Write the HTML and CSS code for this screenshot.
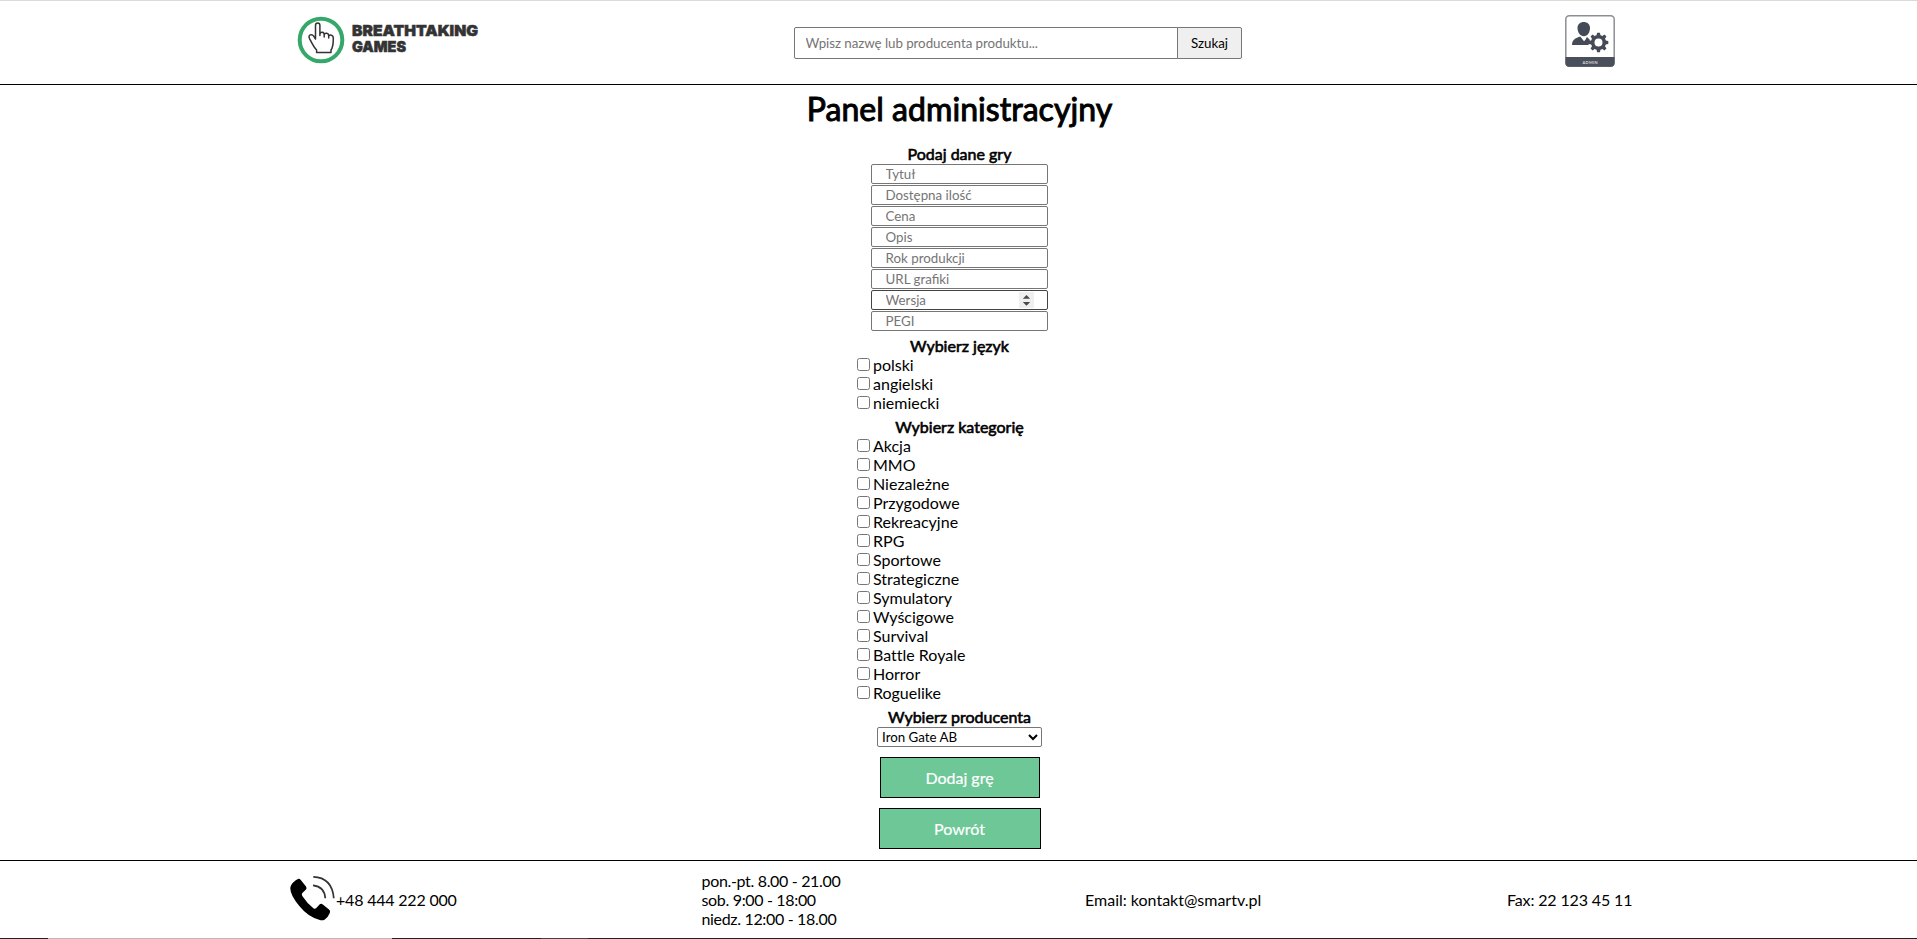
FILE: index.html
```html
<!DOCTYPE html>
<html lang="pl">
<head>
<meta charset="utf-8">
<title>Panel administracyjny</title>
<link rel="stylesheet" href="styles.css">
</head>
<body>
<header class="header">
  <a class="logo">
    <svg width="190" height="64" viewBox="0 0 190 64">
      <circle cx="31" cy="31" r="21.3" fill="#fff" stroke="#35a869" stroke-width="4"/>
      <path d="M26.6 43.5 V41 C23.5 38 21.8 34 19.4 29.3 C17.8 25.8 21.8 24.4 23.7 27.2 L25.5 30 V16.3 C25.5 13.3 29.9 13.3 29.9 16.3 V25 C30.6 22.4 34.2 22.8 34.2 25.5 C35.2 23.4 38.7 24 38.7 26.8 C40 25.2 43.3 26 43.3 29 C43.3 34.6 43.4 37.6 41 41 V43.5 Z M29.9 25 V26.5 M34.2 25.5 V28 M38.7 26.8 V29" fill="none" stroke="#333" stroke-width="1.5" stroke-linejoin="round" stroke-linecap="round"/>
      <text class="brand" x="62" y="27" textLength="126" lengthAdjust="spacingAndGlyphs">BREATHTAKING</text>
      <text class="brand" x="62" y="43" textLength="54" lengthAdjust="spacingAndGlyphs">GAMES</text>
    </svg>
  </a>
  <form class="search">
    <input class="search-input" type="text" placeholder="Wpisz nazwę lub producenta produktu...">
    <button class="search-button" type="button">Szukaj</button>
  </form>
  <a class="admin">
    <svg width="50" height="52" viewBox="0 0 50 52">
      <rect x="0.8" y="0.8" width="48.4" height="50.4" rx="3.5" fill="#fff" stroke="#8b8f95" stroke-width="1.5"/>
      <path d="M0.5 42 H49.5 V48 Q49.5 51.7 46 51.7 H4 Q0.5 51.7 0.5 48 Z" fill="#4a505b"/>
      <path d="M12.5 13 C12.5 5 25 5 25 13 C25 17 22.5 21.3 18.9 21.3 C15 21.3 12.5 17 12.5 13 Z" fill="#454b56"/>
      <path d="M7 30 C7 24 11 23 15.2 21.4 L19 26 L22 22 L25 25 L23.5 30 Z" fill="#454b56"/>
      <path d="M17 23.5 L19 22.3 L21.3 23.6 L19.2 26 Z" fill="#fff"/>
      <g transform="translate(33.5 27.5)" fill="#454b56">
        <circle r="7.6"/>
        <g id="teeth"><path d="M-2 -7 L-1.4 -9.8 H1.4 L2 -7 V7 L1.4 9.8 H-1.4 L-2 7 Z"/></g>
        <use href="#teeth" transform="rotate(45)"/><use href="#teeth" transform="rotate(90)"/><use href="#teeth" transform="rotate(135)"/>
        <circle r="4" fill="#fff"/>
      </g>
      <text class="admin-label" x="25" y="48.5" text-anchor="middle" textLength="15">ADMIN</text>
    </svg>
  </a>
</header>
<main class="panel">
  <h1 class="title">Panel administracyjny</h1>
  <h4 class="heading">Podaj dane gry</h4>
  <div class="fields">
    <input class="field" placeholder="Tytuł">
    <input class="field" placeholder="Dostępna ilość">
    <input class="field" placeholder="Cena">
    <input class="field" placeholder="Opis">
    <input class="field" placeholder="Rok produkcji">
    <input class="field" placeholder="URL grafiki">
    <div class="number">
      <input class="field field-active" placeholder="Wersja">
      <svg class="spin" width="15" height="16" viewBox="0 0 15 16"><rect width="15" height="16" fill="#efefef"/><path d="M3.8 6.8 L7.5 3 L11.2 6.8 Z M3.8 10 L7.5 13.8 L11.2 10 Z" fill="#4a4a4a"/></svg>
    </div>
    <input class="field" placeholder="PEGI">
  </div>
  <h4 class="heading spaced">Wybierz język</h4>
  <div class="options">
    <label class="option"><input type="checkbox">polski</label>
    <label class="option"><input type="checkbox">angielski</label>
    <label class="option"><input type="checkbox">niemiecki</label>
  </div>
  <h4 class="heading spaced">Wybierz kategorię</h4>
  <div class="options">
    <label class="option"><input type="checkbox">Akcja</label>
    <label class="option"><input type="checkbox">MMO</label>
    <label class="option"><input type="checkbox">Niezależne</label>
    <label class="option"><input type="checkbox">Przygodowe</label>
    <label class="option"><input type="checkbox">Rekreacyjne</label>
    <label class="option"><input type="checkbox">RPG</label>
    <label class="option"><input type="checkbox">Sportowe</label>
    <label class="option"><input type="checkbox">Strategiczne</label>
    <label class="option"><input type="checkbox">Symulatory</label>
    <label class="option"><input type="checkbox">Wyścigowe</label>
    <label class="option"><input type="checkbox">Survival</label>
    <label class="option"><input type="checkbox">Battle Royale</label>
    <label class="option"><input type="checkbox">Horror</label>
    <label class="option"><input type="checkbox">Roguelike</label>
  </div>
  <h4 class="heading spaced">Wybierz producenta</h4>
  <select class="producer"><option>Iron Gate AB</option></select>
  <button class="action" type="button">Dodaj grę</button>
  <button class="action action-back" type="button">Powrót</button>
</main>
<footer class="footer">
  <div class="phone">
    <svg width="46" height="48" viewBox="0 0 46 48">
      <path d="M1 9.5 Q3 5.5 8 3 Q9.5 2.4 10.8 4 L16 10.5 Q17.3 12.2 15.8 13.7 L12.3 17 Q11.3 18.4 12.3 20 Q17 27.3 23.4 32.2 Q25 33.3 26.3 32 L29.5 28.6 Q31 27 32.8 28.4 L39 33.6 Q40.8 35 39.8 37 Q38 41.5 34.5 43.7 Q33.3 44.4 30.5 44.2 Q18.5 41.5 9.3 30 Q0.5 19.5 0.3 12.5 Q0.3 11 1 9.5 Z" fill="#000"/>
      <path d="M23 9.3 Q34.5 10.5 35.3 22.3 M23.3 0.9 Q42 1.5 43.8 22.3" fill="none" stroke="#333" stroke-width="1.7"/>
    </svg>
    <span>+48 444 222 000</span>
  </div>
  <div class="hours">pon.-pt. 8.00 - 21.00<br>sob. 9:00 - 18:00<br>niedz. 12:00 - 18.00</div>
  <div class="email">Email: kontakt@smartv.pl</div>
  <div class="fax">Fax: 22 123 45 11</div>
</footer>
<div class="edge"></div>
</body>
</html>
```
FILE: styles.css
```css
* { box-sizing: border-box; }
body {
  margin: 0;
  height: 939px;
  overflow: hidden;
  display: flex;
  flex-direction: column;
  font: 16px/19px Lato, "Liberation Sans", sans-serif;
  color: #000;
  background: #fff;
}
.header {
  height: 85px;
  flex: none;
  display: grid;
  grid-template-columns: 504px 771px 1fr;
  padding-left: 290px;
  border-top: 1px solid #dadada;
  border-bottom: 1px solid #000;
}
.logo { padding-top: 8px; }
.logo svg, .admin svg { display: block; }
.brand { font: 900 15px Inter, sans-serif; fill: #333; stroke: #333; stroke-width: 0.5px; }
.search { display: flex; width: 448px; height: 32px; margin-top: 26px; }
.search-input {
  width: 384px;
  padding: 0 10.5px;
  border: 1px solid #767676;
  border-radius: 2px 0 0 2px;
  font: 13.333px Lato, sans-serif;
  letter-spacing: -0.05px;
}
.search-button {
  width: 65px;
  margin-left: -1px;
  padding: 0;
  border: 1px solid #767676;
  border-radius: 0 2px 2px 0;
  background: #efefef;
  font: 13.333px Lato, sans-serif;
  color: #000;
}
.admin { padding-top: 14px; }
.admin-label { font: 700 4px Lato, sans-serif; fill: #d5d7da; }
.panel {
  height: 775px;
  flex: none;
  display: flex;
  flex-direction: column;
  align-items: center;
  padding-left: 2px;
}
.title {
  margin: 5px 0 16px;
  font-size: 32px;
  line-height: 38px;
  font-weight: 400;
  letter-spacing: 0.05px;
  -webkit-text-stroke: 1px #000;
}
.heading { margin: 0; padding-bottom: 1px; font-size: 16px; font-weight: 400; -webkit-text-stroke: 0.6px #000; }
.spaced { margin-top: 4px; }
.fields { display: flex; flex-direction: column; gap: 1px; padding-bottom: 1px; width: 177px; }
.field {
  display: block;
  width: 177px;
  height: 20px;
  padding: 0 13.5px;
  border: 1px solid #767676;
  border-radius: 2px;
  font: 13.333px Lato, sans-serif;
}
.field-active { border-color: #444; }
.number { position: relative; }
.spin { position: absolute; right: 14px; top: 2px; }
.options { width: 213px; font-variant-ligatures: none; }
.option { display: flex; height: 19px; line-height: 17px; }
.option input { width: 13px; height: 13px; margin: 2px 3px 0 4px; }
.producer {
  width: 165px;
  height: 20px;
  padding: 0;
  border: 1px solid #767676;
  border-radius: 2px;
  background-color: #fff;
  font: 13.333px Lato, sans-serif;
  color: #000;
}
.action {
  width: 160px;
  height: 41px;
  margin-top: 10px;
  padding: 0;
  border: 1px solid #000;
  background: #6dc797;
  color: #fff;
  font: 16px Lato, sans-serif;
  -webkit-text-stroke: 0.2px #fff;
}
.action-back { width: 162px; }
.footer {
  height: 78px;
  flex: none;
  display: grid;
  grid-template-columns: 411.5px 383.5px 422px 1fr;
  align-items: center;
  padding-left: 290px;
  border-top: 1px solid #000;
}
.phone { display: flex; align-items: center; letter-spacing: -0.2px; }
.hours { letter-spacing: -0.33px; }
.fax { letter-spacing: -0.14px; }
.edge {
  height: 1px;
  flex: none;
  background: linear-gradient(90deg, #222 48px, #bbb 48px 392px, #222 392px 541px, #444 541px 588px, #222 588px);
}
```
